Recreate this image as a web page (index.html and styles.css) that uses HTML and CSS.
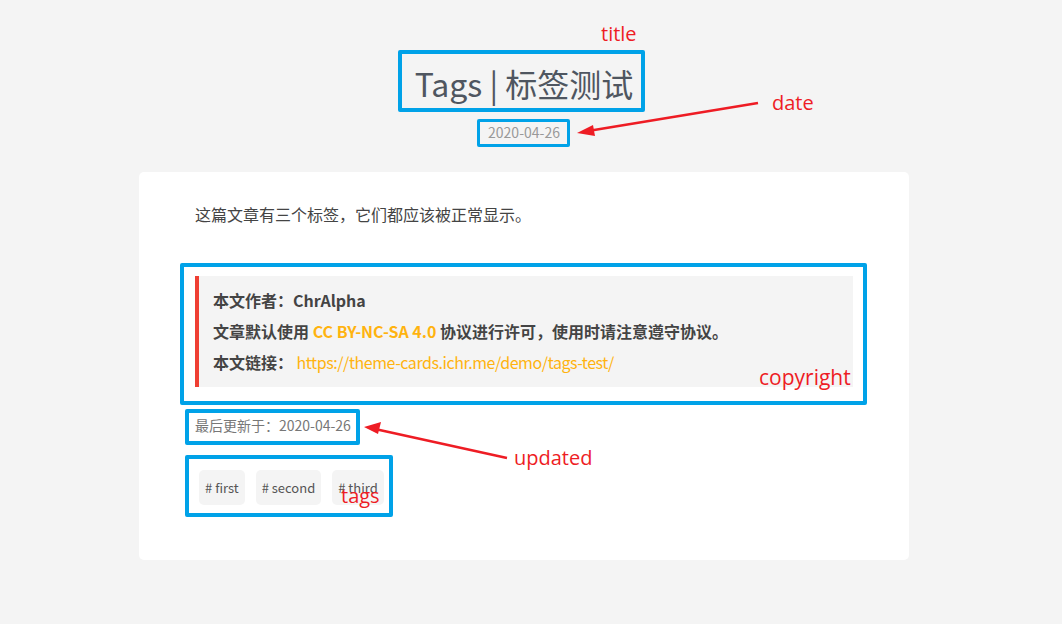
FILE: index.html
```html
<!DOCTYPE html>
<html lang="zh-CN">
<head>
<meta charset="utf-8">
<title>Tags | 标签测试</title>
<link rel="stylesheet" href="styles.css">
</head>
<body>
<div class="page">
  <header class="post-header">
    <h1 class="post-title">Tags | 标签测试</h1>
    <div class="post-date">2020-04-26</div>
  </header>
  <article class="card">
    <p class="intro">这篇文章有三个标签，它们都应该被正常显示。</p>
    <blockquote class="copyright">
      <p><strong>本文作者：</strong><strong>ChrAlpha</strong></p>
      <p><strong>文章默认使用 <a class="link" href="#">CC BY-NC-SA 4.0</a> 协议进行许可，使用时请注意遵守协议。</strong></p>
      <p><strong>本文链接：</strong> <a class="link plain" href="#">https://theme-cards.ichr.me/demo/tags-test/</a></p>
    </blockquote>
    <div class="updated">最后更新于：2020-04-26</div>
    <div class="tags">
      <a class="tag" href="#"># first</a>
      <a class="tag" href="#"># second</a>
      <a class="tag" href="#"># third</a>
    </div>
  </article>
</div>

<div class="annotations">
  <div class="box box-title"></div>
  <div class="box box-date"></div>
  <div class="box box-copyright"></div>
  <div class="box box-updated"></div>
  <div class="box box-tags"></div>
  <span class="label label-title">title</span>
  <span class="label label-date">date</span>
  <span class="label label-copyright">copyright</span>
  <span class="label label-updated">updated</span>
  <span class="label label-tags">tags</span>
  <svg class="arrows" width="1062" height="624" viewBox="0 0 1062 624">
    <line x1="758" y1="103" x2="588" y2="131" stroke="#ee1c24" stroke-width="2.5"/>
    <polygon points="577,133 593,125 595,136" fill="#ee1c24"/>
    <line x1="507" y1="458" x2="375" y2="429" stroke="#ee1c24" stroke-width="2.5"/>
    <polygon points="364,427 381,422 378,434" fill="#ee1c24"/>
  </svg>
</div>
</body>
</html>
```

FILE: styles.css
```css
* { box-sizing: border-box; }

html, body {
  margin: 0;
  padding: 0;
}

body {
  background: #f4f4f4;
  font-family: "Noto Sans CJK SC", "Open Sans", sans-serif;
  color: #444;
  width: 1062px;
  height: 624px;
  overflow: hidden;
  position: relative;
}

.page {
  width: 1048px;
  display: flex;
  flex-direction: column;
  align-items: center;
}

.post-header {
  padding-top: 63px;
  display: flex;
  flex-direction: column;
  align-items: center;
}

.post-title {
  margin: 0;
  font-size: 32px;
  line-height: 40px;
  font-weight: 400;
  color: #4f5660;
}

.post-date {
  margin-top: 19px;
  font-size: 14px;
  line-height: 20px;
  color: #999;
}

.card {
  margin-top: 30px;
  width: 770px;
  height: 388px;
  background: #fff;
  border-radius: 5px;
  padding: 30px 56px 0;
}

.intro {
  margin: 0;
  font-size: 16px;
  line-height: 24px;
  color: #444;
}

.copyright {
  margin: 50px 0 0;
  background: #f4f4f4;
  border-left: 4px solid #ef3f33;
  padding: 9px 14px;
  font-size: 16px;
}

.copyright p {
  margin: 0;
  line-height: 31px;
}

.copyright strong {
  font-weight: 700;
  color: #444;
}

.link {
  color: #ffb30f;
  text-decoration: none;
}

.link.plain {
  font-weight: 400;
  letter-spacing: -0.45px;
}

.updated {
  margin-top: 28px;
  font-size: 14px;
  line-height: 20px;
  color: #777;
}

.tags {
  margin-top: 35px;
  display: flex;
  gap: 11px;
  padding-left: 4px;
}

.tag {
  display: block;
  background: #f4f4f4;
  border-radius: 5px;
  padding: 0 6px;
  height: 35px;
  line-height: 35px;
  font-size: 13px;
  color: #555;
  text-decoration: none;
}

/* annotation layer */
.annotations {
  position: absolute;
  inset: 0;
  pointer-events: none;
}

.box {
  position: absolute;
  border: 4px solid #00a2e8;
  border-radius: 2px;
}

.box-title { left: 398px; top: 50px; width: 247px; height: 62px; }
.box-date { left: 477px; top: 119px; width: 93px; height: 28px; border-width: 3px; }
.box-copyright { left: 180px; top: 263px; width: 687px; height: 142px; }
.box-updated { left: 185px; top: 409px; width: 175px; height: 36px; }
.box-tags { left: 185px; top: 455px; width: 208px; height: 62px; }

.label {
  position: absolute;
  color: #ee1c24;
  font-family: "Open Sans", sans-serif;
  font-size: 20px;
  line-height: 24px;
}

.label-title { left: 601px; top: 22px; }
.label-date { left: 772px; top: 91px; }
.label-copyright { left: 759px; top: 365px; font-size: 21px; }
.label-updated { left: 514px; top: 446px; }
.label-tags { left: 341px; top: 484px; }

.arrows {
  position: absolute;
  left: 0;
  top: 0;
}
```
